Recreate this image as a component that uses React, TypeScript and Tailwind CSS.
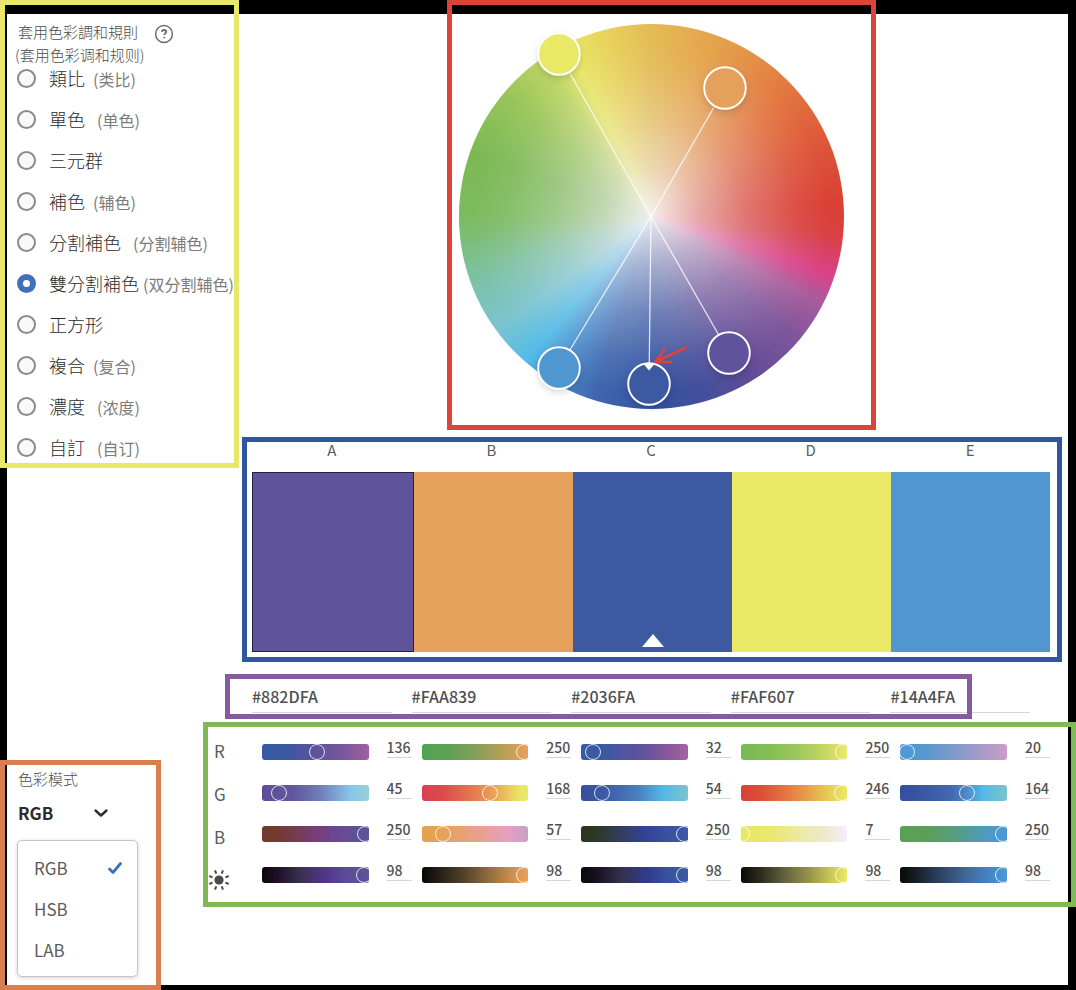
import { useState } from 'react';
import type { ReactNode } from 'react';

function Frame({ color, className = '', children }: { color: string; className?: string; children: ReactNode }) {
  return (
    <section className={`relative ${className}`}>
      {children}
      <div className={`pointer-events-none absolute inset-0 border-[5px] ${color}`} />
    </section>
  );
}

const rules = [
  { name: '類比', note: '(类比)', gap: 'gap-2' },
  { name: '單色', note: '(单色)', gap: 'gap-3' },
  { name: '三元群', note: '', gap: 'gap-2' },
  { name: '補色', note: '(辅色)', gap: 'gap-2' },
  { name: '分割補色', note: '(分割辅色)', gap: 'gap-3' },
  { name: '雙分割補色', note: '(双分割辅色)', gap: 'gap-1' },
  { name: '正方形', note: '', gap: 'gap-2' },
  { name: '複合', note: '(复合)', gap: 'gap-2' },
  { name: '濃度', note: '(浓度)', gap: 'gap-3' },
  { name: '自訂', note: '(自订)', gap: 'gap-3' },
];

const channels = ['R', 'G', 'B', '亮度'];

const colors = [
  {
    id: 'A', hex: '#882DFA', fill: 'bg-[#5f549b] border-[#241f45]', values: [136, 45, 250, 98],
    tracks: [
      'bg-[linear-gradient(90deg,#365aa5,#3c57a2_22%,#5d529c_50%,#7a569c_75%,#a0609f)]',
      'bg-[linear-gradient(90deg,#5d4d99,#62589f_30%,#7080b9_55%,#88c6ea_83%,#98d1d4)]',
      'bg-[linear-gradient(90deg,#703a2c,#74392f_15%,#793c74_48%,#6d4590_65%,#5d529c_90%,#5d529c)]',
      'bg-[linear-gradient(90deg,#090909,#1e0e24_14%,#383050_35%,#52378a_60%,#5b4a98_78%,#5f549d)]',
    ],
  },
  {
    id: 'B', hex: '#FAA839', fill: 'bg-[#e5a05b] border-[#e5a05b]', values: [250, 168, 57, 98],
    tracks: [
      'bg-[linear-gradient(90deg,#51a353,#60a055_25%,#88a058_52%,#bf9f59_80%,#e8a05b)]',
      'bg-[linear-gradient(90deg,#db3f50,#dd4b4c_20%,#e3754e_45%,#e69c56_65%,#e9e568_92%,#e9e86c)]',
      'bg-[linear-gradient(90deg,#e5a24a,#e5a260_25%,#e8a18f_55%,#e79fc0_79%,#c9a0c7)]',
      'bg-[linear-gradient(90deg,#090807,#2b241b_20%,#5a452d_42%,#96703f_65%,#dc9752_90%,#e8a05b)]',
    ],
  },
  {
    id: 'C', hex: '#2036FA', fill: 'bg-[#3d59a2] border-[#3d59a2]', values: [32, 54, 250, 98],
    tracks: [
      'bg-[linear-gradient(90deg,#355ca8,#4058a2_25%,#5d529c_55%,#81579c_77%,#a3629f)]',
      'bg-[linear-gradient(90deg,#364f9c,#3e5da5_25%,#4980bd_53%,#56b9e6_78%,#7cc3ca)]',
      'bg-[linear-gradient(90deg,#2a3520,#2d3824_14%,#343d62_38%,#34449a_63%,#39529f_82%,#3c5aa5)]',
      'bg-[linear-gradient(90deg,#090909,#17101f_14%,#35304e_38%,#313d8e_64%,#3b539f_83%,#3c5aa5)]',
    ],
  },
  {
    id: 'D', hex: '#FAF607', fill: 'bg-[#e9e867] border-[#e9e867]', values: [250, 246, 7, 98],
    tracks: [
      'bg-[linear-gradient(90deg,#7aba56,#83bd55_25%,#98c65b_50%,#bfd461_75%,#ece96c)]',
      'bg-[linear-gradient(90deg,#da3f38,#dc4d37_18%,#e26f40_38%,#e49a4b_60%,#e7d158_85%,#ebe765)]',
      'bg-[linear-gradient(90deg,#e9e760,#eae773_30%,#eceaa3_56%,#eee9c9_78%,#f5effc)]',
      'bg-[linear-gradient(90deg,#090908,#303020_20%,#65643e_42%,#97964a_65%,#cfcc5b_87%,#ece967)]',
    ],
  },
  {
    id: 'E', hex: '#14A4FA', fill: 'bg-[#5096d0] border-[#5096d0]', values: [20, 164, 250, 98],
    tracks: [
      'bg-[linear-gradient(90deg,#4f9ad6,#5397d0_22%,#7b9bcc_48%,#a09bc9_72%,#ca9ec6)]',
      'bg-[linear-gradient(90deg,#344e9e,#3b5aa3_25%,#4368af_48%,#4d83c1_60%,#54b9e7_77%,#7bc3ca)]',
      'bg-[linear-gradient(90deg,#5aa053,#5b9f56_25%,#569d83_54%,#509bb1_73%,#4b97d5_92%,#4b97d5)]',
      'bg-[linear-gradient(90deg,#090909,#162027_16%,#2c405e_36%,#416b9e_64%,#4587c9_85%,#4d99d9)]',
    ],
  },
];

const nodes = [
  { x: 100, y: 30, fill: '#e9e867' },
  { x: 266, y: 64, fill: '#e5a05b' },
  { x: 270, y: 329, fill: '#5f549b' },
  { x: 190, y: 360, fill: '#3d59a2' },
  { x: 100, y: 344, fill: '#5096d0' },
];

function HarmonyRules() {
  const [rule, setRule] = useState('雙分割補色');
  return (
    <Frame color="border-[#e9e769]" className="overflow-hidden pt-5 pb-[11px] pl-[17px]">
      <div className="flex items-center gap-4 pl-px">
        <h2 id="rules-label" className="text-[15px] leading-[22px] font-light text-[#4c4c4c]">套用色彩調和規則</h2>
        <button type="button" aria-label="說明" className="mt-1 flex size-5 items-center justify-center">
          <svg viewBox="0 0 20 20" className="size-5" fill="none" stroke="#6c6c6c" strokeWidth="1.5">
            <circle cx="10" cy="10" r="8.4" />
            <path d="M7.9 7.9C8 6.7 9 6 10.1 6c1.3 0 2.2.7 2.2 1.8 0 1.5-2.1 1.6-2.1 3.3" strokeWidth="1.8" />
            <circle cx="10.2" cy="13.6" r=".6" fill="#6c6c6c" strokeWidth=".9" />
          </svg>
        </button>
      </div>
      <p lang="zh-CN" className="-ml-0.5 font-['Noto_Sans_CJK_SC',sans-serif] text-[15px] leading-[22px] font-light text-[#4c4c4c]">(套用色彩调和规则)</p>
      <div role="radiogroup" aria-labelledby="rules-label" className="flex flex-col gap-[21px] pt-0.5">
        {rules.map((r) => (
          <label key={r.name} className="flex h-5 items-center whitespace-nowrap">
            <input
              type="radio"
              name="rule"
              checked={rule === r.name}
              onChange={() => setRule(r.name)}
              className="mr-[13px] size-[19px] shrink-0 appearance-none rounded-full border-2 border-[#8a8a8c] bg-[#f8fafa] checked:border-[6px] checked:border-[#4270b8] checked:bg-white"
            />
            <span className={`flex ${r.gap}`}>
              <span className="text-[18px] leading-5 font-light text-[#2c2c2c]">{r.name}</span>
              <span lang="zh-CN" className="pt-px font-['Noto_Sans_CJK_SC',sans-serif] text-[16px] leading-5 text-[#7c7c7c]">{r.note}</span>
            </span>
          </label>
        ))}
      </div>
    </Frame>
  );
}

function ColorMode() {
  const [mode, setMode] = useState('RGB');
  return (
    <Frame color="border-[#d77f4f]" className="w-[161px] pt-[9px] pr-[23px] pb-[13px] pl-[17px]">
      <p id="mode-label" className="pl-px text-[15px] leading-5 font-light text-[#4c4c4c]">色彩模式</p>
      <button type="button" aria-labelledby="mode-label" aria-haspopup="listbox" className="mt-3 flex w-[92px] items-center justify-between pl-px text-[17px] leading-6 font-bold text-[#2c2c2c]">
        {mode}
        <svg viewBox="0 0 16 12" className="h-3 w-4" fill="none" stroke="#2c2c2c" strokeWidth="2.4" strokeLinecap="round" strokeLinejoin="round">
          <path d="M2.5 3.5 8 8.5l5.500-5" />
        </svg>
      </button>
      <ul role="listbox" aria-labelledby="mode-label" className="mt-[15px] rounded-[5px] border border-[#c6c6c6] bg-white py-1.5 shadow-[0_1px_4px_rgba(0,0,0,0.18)]">
        {['RGB', 'HSB', 'LAB'].map((m) => (
          <li key={m} role="option" aria-selected={m === mode}>
            <button type="button" onClick={() => setMode(m)} className="flex h-[41px] w-full items-center justify-between pr-3.5 pl-4 text-[17px] text-[#5c5c5c]">
              {m}
              {m === mode && (
                <svg viewBox="0 0 16 14" className="h-3.5 w-4" fill="none" stroke="#4070b8" strokeWidth="2.8" strokeLinecap="round" strokeLinejoin="round">
                  <path d="M2.5 8 6 11.5 13.5 2.5" />
                </svg>
              )}
            </button>
          </li>
        ))}
      </ul>
    </Frame>
  );
}

function Wheel() {
  return (
    <div className="relative size-[385px] rounded-full bg-[radial-gradient(circle_closest-side,rgba(246,243,245,0.94),rgba(240,236,238,0.6)_25%,rgba(240,236,240,0.3)_50%,rgba(240,236,240,0.09)_75%,rgba(240,236,240,0)_92%),conic-gradient(#e4bb54_0deg,#e5a54d_18deg,#e49148_32deg,#e2723f_50deg,#dd5539_68deg,#da4035_86deg,#d94040_95deg,#db4289_108deg,#a85c9b_117deg,#7e569b_130deg,#614c97_148deg,#454f9b_163deg,#3451a0_178deg,#4068b0_198deg,#4b93d0_212deg,#54bce8_221deg,#7bc4cf_234deg,#7dc1a0_252deg,#7cbb5e_270deg,#7cb955_290deg,#98c55a_310deg,#bdd565_325deg,#e8e766_334deg,#e8d45b_345deg,#e4bb54_360deg)]">
      <svg viewBox="0 0 385 385" role="img" aria-label="色輪" className="absolute inset-0 size-full overflow-visible">
        <g stroke="#fff" strokeOpacity=".8" strokeWidth="1.3">
          {nodes.map((n) => (
            <line key={n.fill} x1="192" y1="192.5" x2={n.x} y2={n.y} />
          ))}
        </g>
        {nodes.map((n) => (
          <circle key={n.fill} cx={n.x} cy={n.y} r="20.8" fill={n.fill} stroke="#fff" strokeWidth="1.9" className="drop-shadow-[0_3px_3px_rgba(0,0,0,0.14)]" />
        ))}
        <path d="M184.5 340q5.5-3 11 0l-5.500 6.500z" fill="#fff" />
        <path d="M227 323.5 196 338M206 325l-10 13h16" fill="none" stroke="#dc4438" strokeWidth="2.6" strokeLinecap="round" strokeLinejoin="round" />
      </svg>
    </div>
  );
}

function Swatches() {
  return (
    <Frame color="border-[#31559f]" className="mt-[7px] mr-3.5 ml-[3px] pt-[3px] pr-3 pb-2.5 pl-2.5">
      <div className="grid grid-cols-5 text-center text-[15px] leading-5 text-[#5c5c5c]">
        {colors.map((c) => <span key={c.id}>{c.id}</span>)}
      </div>
      <div className="mt-3 grid grid-cols-[162fr_159fr_159fr_159fr_159fr]">
        {colors.map((c) => (
          <button key={c.id} type="button" aria-label={c.hex} className={`flex h-[180px] items-end justify-center border pb-1 ${c.fill}`}>
            {c.id === 'C' && (
              <svg viewBox="0 0 22 13" className="h-[13px] w-[22px]"><path d="M11 0 22 13H0z" fill="#fff" /></svg>
            )}
          </button>
        ))}
      </div>
    </Frame>
  );
}

function HexRow() {
  return (
    <Frame color="border-[#865c9f]" className="mt-3 mr-[104px] -ml-3.5 pt-2 pb-1.5 pl-[27px]">
      <div className="-mr-[78px] grid grid-cols-5">
        {colors.map((c) => (
          <input key={c.id} aria-label={`${c.id} HEX`} defaultValue={c.hex} className="mr-5 h-[31px] min-w-0 border-b border-[#d6d6d6] pb-0.5 text-[16px] font-medium text-[#505050]" />
        ))}
      </div>
    </Frame>
  );
}

function SunIcon() {
  return (
    <svg viewBox="-10 -10 20 20" role="img" aria-label="亮度" className="h-6 w-5" stroke="#4b4b4b" strokeWidth="2">
      <circle r="4.6" fill="#4b4b4b" stroke="none" />
      {[22.5, 67.5, 112.5, 157.5, 202.5, 247.5, 292.5, 337.5].map((a) => (
        <line key={a} y1="-7" y2="-10.5" transform={`rotate(${a})`} />
      ))}
    </svg>
  );
}

function Sliders() {
  return (
    <Frame color="border-[#80ba58]" className="mt-[3px] -ml-9 flex pt-[17px] pr-[26px] pb-[15px] pl-1.5">
      <div className="flex w-[43px] shrink-0 flex-col gap-[19px] text-[17px] leading-6 text-[#5c5c5c]">
        <span className="pl-[5px]">R</span>
        <span className="pl-[5px]">G</span>
        <span className="pl-[5px]">B</span>
        <SunIcon />
      </div>
      <div className="grid flex-1 grid-cols-5">
        {colors.map((c) => (
          <div key={c.id} className="flex min-w-0 flex-col gap-5 pl-2.5">
            {channels.map((ch, i) => (
              <div key={ch} className="flex h-[21px] gap-[18px]">
                <div className={`h-4 min-w-0 flex-1 self-end overflow-hidden rounded-[3px] ${c.tracks[i]}`}>
                  <input
                    type="range"
                    min={0}
                    max={i === 3 ? 100 : 255}
                    defaultValue={c.values[i]}
                    aria-label={`${c.id} ${ch}`}
                    className="-ml-2.5 block h-4 w-[calc(100%+16px)] appearance-none bg-transparent [&::-webkit-slider-thumb]:size-4 [&::-webkit-slider-thumb]:appearance-none [&::-webkit-slider-thumb]:rounded-full [&::-webkit-slider-thumb]:border [&::-webkit-slider-thumb]:border-white/80 [&::-webkit-slider-thumb]:bg-transparent"
                  />
                </div>
                <input
                  defaultValue={c.values[i]}
                  aria-label={`${c.id} ${ch} 數值`}
                  className="h-[19px] w-[25px] shrink-0 border-b border-[#d6d6d6] pb-0.5 text-[14px] leading-4 font-medium text-[#505050]"
                />
              </div>
            ))}
          </div>
        ))}
      </div>
    </Frame>
  );
}

export default function App() {
  return (
    <div lang="zh-TW" className="relative flex min-h-screen bg-black font-['Noto_Sans_CJK_TC','Noto_Sans_CJK_SC',sans-serif]">
      <div className="absolute top-3.5 right-2 bottom-[5px] left-[7px] bg-white" />
      <aside className="relative flex w-[239px] shrink-0 flex-col justify-between">
        <HarmonyRules />
        <ColorMode />
      </aside>
      <main className="relative min-w-0 flex-1">
        <Frame color="border-[#dc4438]" className="ml-[208px] w-[429px] pt-6 pb-[21px] pl-3">
          <Wheel />
        </Frame>
        <Swatches />
        <HexRow />
        <Sliders />
      </main>
    </div>
  );
}
